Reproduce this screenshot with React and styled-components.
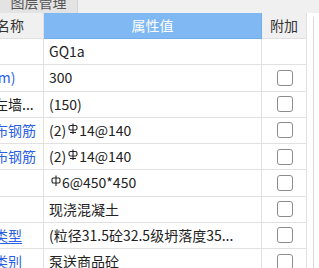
import React from 'react'
import styled, { createGlobalStyle } from 'styled-components'

const GlobalStyle = createGlobalStyle`
  html, body {
    margin: 0;
    padding: 0;
    background: #ffffff;
  }
  body {
    font-family: 'Noto Sans CJK SC', 'Noto Sans', sans-serif;
  }
`

const Screen = styled.div`
  width: 319px;
  height: 268px;
  overflow: hidden;
  display: flex;
  flex-direction: column;
  background: #ffffff;
`
const TabBar = styled.div`
  flex: none;
  height: 13px;
  display: flex;
  background: #f0f0f0;
  overflow: hidden;
`
const Tab = styled.div`
  width: 77px;
  height: 24px;
  margin-top: -9px;
  background: #e3e3e3;
  border-right: 1px solid #d2d2d2;
  color: #555555;
  font-size: 14px;
  line-height: 22px;
  text-align: center;
`
const Body = styled.div`
  flex: 1;
  min-height: 0;
  display: flex;
`
// the grid is scrolled sideways, so the name column starts off screen
const Table = styled.div`
  flex: none;
  width: 358px;
  margin-left: -51px;
`
const Row = styled.div`
  display: grid;
  grid-template-columns: 95px 218px 45px;
  height: ${props => (props.head ? 26 : 26.25)}px;
`
const Cell = styled.div`
  box-sizing: border-box;
  border-right: 1px solid #e1e1e1;
  border-bottom: 1px solid #e1e1e1;
  font-size: 14px;
  line-height: 25px;
  white-space: nowrap;
  overflow: hidden;
`
const HeadCell = styled(Cell)`
  text-align: center;
  background: ${props => (props.active ? '#7fb8f2' : '#f0f0f0')};
  color: ${props => (props.active ? '#ffffff' : '#333333')};
  border-color: ${props => (props.active ? '#74aeea' : '#e1e1e1')};
`
const NameCell = styled(Cell)`
  padding-left: 3px;
  color: ${props => (props.link ? '#2b5fe4' : '#222222')};
  text-decoration: ${props => (props.underline ? 'underline' : 'none')};
  text-underline-offset: 2px;
`
const ValueCell = styled(Cell)`
  padding: 0 5px;
  color: #222222;
`
const ExtraCell = styled(Cell)`
  display: flex;
  align-items: center;
  justify-content: center;
  padding-left: 2px;
`
const Check = styled.span`
  box-sizing: border-box;
  width: 16px;
  height: 16px;
  border: 1.5px solid #8c8c8c;
  border-radius: 3px;
  background: #ffffff;
`
const Gap = styled.div`
  flex: none;
  width: 6px;
`
const SidePanel = styled.div`
  flex: 1;
  margin-top: 4px;
  border-left: 1px solid #d9d9d9;
  background: #ffffff;
`
const Sym = styled.svg`
  width: 10px;
  height: 12px;
  margin: 0 1px 0 2px;
  vertical-align: 1px;
`

const Grade3 = () => (
  <Sym viewBox="0 0 10 12">
    <g fill="none" stroke="#222" strokeWidth="1.1">
      <path d="M5 0.5V11" />
      <rect x="1" y="2.5" width="8" height="4.5" rx="1.6" />
      <path d="M2 9.5H8" />
    </g>
  </Sym>
)

const Grade1 = () => (
  <Sym viewBox="0 0 10 12">
    <g fill="none" stroke="#222" strokeWidth="1.1">
      <path d="M5 0.5V11" />
      <rect x="1" y="3" width="8" height="5" rx="1.4" />
    </g>
  </Sym>
)

const rows = [
  { name: '名称', value: 'GQ1a', check: false },
  { name: '厚度(mm)', value: '300', link: true },
  { name: '轴线距左墙...', value: '(150)' },
  { name: '水平分布钢筋', value: <>(2)<Grade3 />14@140</>, link: true },
  { name: '垂直分布钢筋', value: <>(2)<Grade3 />14@140</>, link: true },
  { name: '拉筋', value: <><Grade1 />6@450*450</>, link: true },
  { name: '材质', value: '现浇混凝土' },
  { name: '混凝土类型', value: '(粒径31.5砼32.5级坍落度35...', link: true, underline: true },
  { name: '混凝土类别', value: '泵送商品砼', link: true, underline: true }
]

const App = () => (
  <Screen>
    <GlobalStyle />
    <TabBar>
      <Tab>图层管理</Tab>
    </TabBar>
    <Body>
      <Table>
        <Row head>
          <HeadCell>属性名称</HeadCell>
          <HeadCell active>属性值</HeadCell>
          <HeadCell>附加</HeadCell>
        </Row>
        {rows.map((row, i) => (
          <Row key={i}>
            <NameCell link={row.link} underline={row.underline}>
              {row.name}
            </NameCell>
            <ValueCell>{row.value}</ValueCell>
            <ExtraCell>{row.check !== false && <Check />}</ExtraCell>
          </Row>
        ))}
      </Table>
      <Gap />
      <SidePanel />
    </Body>
  </Screen>
)

export default App
